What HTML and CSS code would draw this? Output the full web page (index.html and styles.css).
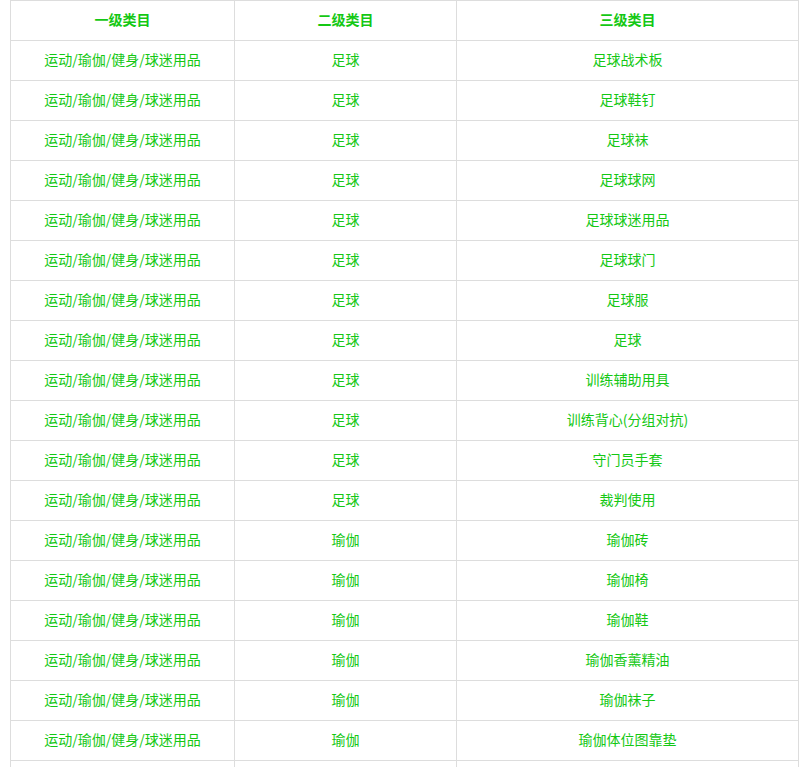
FILE: index.html
```html
<!DOCTYPE html>
<html lang="zh-CN">
<head>
<meta charset="utf-8">
<title>类目</title>
<link rel="stylesheet" href="styles.css">
</head>
<body>
<table class="cat-table">
  <colgroup>
    <col class="c1"><col class="c2"><col class="c3">
  </colgroup>
  <thead>
    <tr><th>一级类目</th><th>二级类目</th><th>三级类目</th></tr>
  </thead>
  <tbody>
    <tr><td>运动/瑜伽/健身/球迷用品</td><td>足球</td><td>足球战术板</td></tr>
    <tr><td>运动/瑜伽/健身/球迷用品</td><td>足球</td><td>足球鞋钉</td></tr>
    <tr><td>运动/瑜伽/健身/球迷用品</td><td>足球</td><td>足球袜</td></tr>
    <tr><td>运动/瑜伽/健身/球迷用品</td><td>足球</td><td>足球球网</td></tr>
    <tr><td>运动/瑜伽/健身/球迷用品</td><td>足球</td><td>足球球迷用品</td></tr>
    <tr><td>运动/瑜伽/健身/球迷用品</td><td>足球</td><td>足球球门</td></tr>
    <tr><td>运动/瑜伽/健身/球迷用品</td><td>足球</td><td>足球服</td></tr>
    <tr><td>运动/瑜伽/健身/球迷用品</td><td>足球</td><td>足球</td></tr>
    <tr><td>运动/瑜伽/健身/球迷用品</td><td>足球</td><td>训练辅助用具</td></tr>
    <tr><td>运动/瑜伽/健身/球迷用品</td><td>足球</td><td>训练背心(分组对抗)</td></tr>
    <tr><td>运动/瑜伽/健身/球迷用品</td><td>足球</td><td>守门员手套</td></tr>
    <tr><td>运动/瑜伽/健身/球迷用品</td><td>足球</td><td>裁判使用</td></tr>
    <tr><td>运动/瑜伽/健身/球迷用品</td><td>瑜伽</td><td>瑜伽砖</td></tr>
    <tr><td>运动/瑜伽/健身/球迷用品</td><td>瑜伽</td><td>瑜伽椅</td></tr>
    <tr><td>运动/瑜伽/健身/球迷用品</td><td>瑜伽</td><td>瑜伽鞋</td></tr>
    <tr><td>运动/瑜伽/健身/球迷用品</td><td>瑜伽</td><td>瑜伽香薰精油</td></tr>
    <tr><td>运动/瑜伽/健身/球迷用品</td><td>瑜伽</td><td>瑜伽袜子</td></tr>
    <tr><td>运动/瑜伽/健身/球迷用品</td><td>瑜伽</td><td>瑜伽体位图靠垫</td></tr>
    <tr><td></td><td></td><td></td></tr>
  </tbody>
</table>
</body>
</html>
```
FILE: styles.css
```css
html, body {
  margin: 0;
  padding: 0;
  background: #fff;
}
body {
  padding: 0 9px 0 10px;
  font-family: "Microsoft YaHei", "Noto Sans CJK SC", "Noto Sans", sans-serif;
  font-size: 14px;
  color: #14c814;
}
.cat-table {
  width: 788px;
  border-collapse: collapse;
  table-layout: fixed;
}
.c1 { width: 224px; }
.c2 { width: 222px; }
.c3 { width: 342px; }
.cat-table th,
.cat-table td {
  border: 1px solid #dddddd;
  height: 40px;
  padding: 0 0 3px 0;
  text-align: center;
  vertical-align: middle;
  line-height: 20px;
  box-sizing: border-box;
}
.cat-table th {
  font-weight: bold;
}
.cat-table td {
  font-weight: normal;
}
```
